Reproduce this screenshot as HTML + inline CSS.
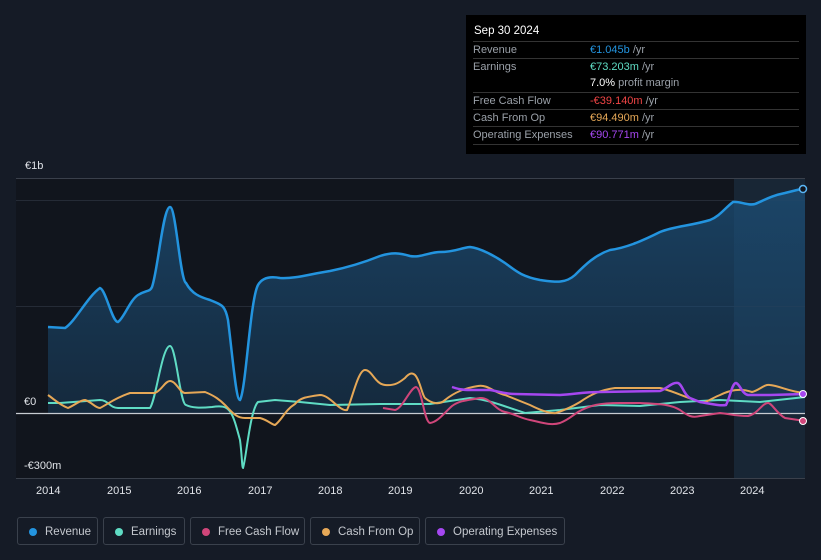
<!DOCTYPE html><html><head><style>
body{margin:0;width:821px;height:560px;background:#151b26;font-family:"Liberation Sans",sans-serif;overflow:hidden;position:relative}
.tt{position:absolute;left:466px;top:15px;width:340px;height:139px;background:#000;color:#9aa0a8;font-size:11px}
.tt .h{position:absolute;left:8px;top:10px;color:#fff;font-size:11.5px}
.row{position:absolute;left:7px;width:326px;height:17px;border-top:1px solid #333;line-height:17px}
.row span{position:absolute;left:0}.row b{position:absolute;left:117px;font-weight:normal}
.lg{position:absolute;top:517px;height:28px;border:1px solid #3a414c;border-radius:3px;color:#c4c8ce;font-size:11.5px;line-height:28px;box-sizing:border-box;padding-left:27px}
.lg i{position:absolute;left:11px;top:10px;width:8px;height:8px;border-radius:50%}
.ax{position:absolute;color:#e0e3e8;font-size:11px}
</style></head><body>
<svg width="821" height="560" style="position:absolute;left:0;top:0">
<defs><linearGradient id="g" x1="0" y1="0" x2="0" y2="1"><stop offset="0" stop-color="#1c4f78" stop-opacity=".75"/><stop offset="1" stop-color="#1c4f78" stop-opacity=".35"/></linearGradient></defs>
<rect x="16" y="178" width="789" height="300" fill="#11151d"/>
<rect x="734" y="178" width="71" height="300" fill="#1a2a3c" opacity=".8"/>
<line x1="16" y1="178.5" x2="805" y2="178.5" stroke="#3a404b"/>
<line x1="16" y1="200.5" x2="805" y2="200.5" stroke="#252b36"/>
<line x1="16" y1="306.5" x2="805" y2="306.5" stroke="#252b36"/>
<line x1="16" y1="478.5" x2="805" y2="478.5" stroke="#3a404b"/>
<path d="M48,327 L65,328 C75,322 88,296 100,288 C106,290 112,322 118,322 C124,318 130,300 138,295 C146,290 150,292 152,287 C158,270 163,207 170,207 C176,207 180,280 186,283 C192,294 200,297 210,300 C222,305 225,305 228,320 C233,360 236,400 240,400 C246,390 250,300 258,285 C262,278 270,276 280,278 C295,279 310,274 330,271 C350,267 365,262 380,256 C392,252 400,253 410,256 C420,258 430,252 440,252 C455,252 460,248 470,247 C480,248 495,256 505,263 C515,270 520,276 540,280 C555,282 565,284 575,275 C585,265 595,255 610,250 C625,248 640,242 660,232 C675,226 690,226 710,220 C720,216 725,208 733,202 C740,201 748,206 755,204 C765,200 770,196 785,193 L805,188 L805,413 L48,413 Z" fill="url(#g)"/>
<path d="M48,327 L65,328 C75,322 88,296 100,288 C106,290 112,322 118,322 C124,318 130,300 138,295 C146,290 150,292 152,287 C158,270 163,207 170,207 C176,207 180,280 186,283 C192,294 200,297 210,300 C222,305 225,305 228,320 C233,360 236,400 240,400 C246,390 250,300 258,285 C262,278 270,276 280,278 C295,279 310,274 330,271 C350,267 365,262 380,256 C392,252 400,253 410,256 C420,258 430,252 440,252 C455,252 460,248 470,247 C480,248 495,256 505,263 C515,270 520,276 540,280 C555,282 565,284 575,275 C585,265 595,255 610,250 C625,248 640,242 660,232 C675,226 690,226 710,220 C720,216 725,208 733,202 C740,201 748,206 755,204 C765,200 770,196 785,193 L805,188" fill="none" stroke="#2394df" stroke-width="2.5"/>
<line x1="16" y1="413.5" x2="805" y2="413.5" stroke="#c8ccd2" stroke-width="1.2"/>
<path d="M48,403 L60,403 L100,400 C108,400 110,408 118,408 L150,408 C156,400 162,346 170,346 C176,346 180,404 186,405 C192,408 200,408 212,407 C230,404 232,410 240,440 C242,455 242,468 243,468 C246,460 250,410 258,402 L275,400 L300,402 L330,405 L380,404 L430,404 L470,398 C490,400 500,405 525,413 L560,410 L600,405 L640,406 L680,402 L720,400 L760,402 L805,397" fill="none" stroke="#5fdcc4" stroke-width="2"/>
<path d="M48,395 C55,400 60,405 68,408 C75,405 80,400 85,400 C92,402 95,408 100,408 C108,404 115,398 130,393 L155,393 C162,390 165,381 170,381 C176,381 180,393 185,393 L205,392 C215,396 220,400 225,405 C232,412 236,418 245,418 L260,418 C268,420 272,425 275,425 C282,420 285,410 295,404 C300,398 305,397 320,395 C330,395 340,412 347,410 C352,400 358,370 365,370 C372,370 375,384 385,385 C395,386 400,382 405,378 C410,372 413,373 415,375 C420,380 422,395 425,398 C432,404 440,405 445,400 C455,392 465,388 478,386 C487,384 495,393 505,395 L530,405 C540,410 550,414 556,413 C565,410 575,405 580,402 C590,395 600,390 615,388 L660,388 C670,390 680,395 700,402 C705,404 712,398 720,395 C730,390 740,388 752,392 C760,390 764,384 770,385 C780,386 790,392 805,393" fill="none" stroke="#e6a857" stroke-width="2"/>
<path d="M383,408 L395,410 C403,408 410,388 416,387 C422,388 424,422 430,423 C438,422 445,412 452,406 C460,400 470,400 480,398 C490,397 495,410 505,412 C515,414 520,418 530,420 C540,422 550,426 560,423 C568,420 572,416 578,412 C590,405 600,403 620,403 L640,403 C660,404 670,404 680,410 C688,416 692,418 700,416 L720,413 C730,414 735,416 748,416 C758,414 762,403 768,403 C772,403 776,413 785,418 L805,421" fill="none" stroke="#d0467a" stroke-width="2"/>
<path d="M452,387 C458,389 462,390 470,390 L490,390 C498,391 504,394 515,394 L560,395 C575,394 585,392 600,392 L660,391 C668,388 672,382 678,383 C682,384 684,395 690,398 L700,402 C712,404 720,406 726,405 C730,398 732,383 736,383 C740,384 742,394 748,395 L770,395 L805,394" fill="none" stroke="#a547f0" stroke-width="2.5"/>
<circle cx="803" cy="189" r="3.5" fill="#11151d" stroke="#5ab6f5" stroke-width="1.5"/>
<circle cx="803" cy="394" r="3.5" fill="#a547f0" stroke="#fff" stroke-width="1"/>
<circle cx="803" cy="421" r="3.5" fill="#d0467a" stroke="#fff" stroke-width="1"/>
</svg>
<div class="ax" style="left:25px;top:160px">€1b</div>
<div class="ax" style="left:24px;top:396px">€0</div>
<div class="ax" style="left:24px;top:460px">-€300m</div>
<div class="ax" style="left:36px;top:485px">2014</div><div class="ax" style="left:107px;top:485px">2015</div><div class="ax" style="left:177px;top:485px">2016</div><div class="ax" style="left:248px;top:485px">2017</div><div class="ax" style="left:318px;top:485px">2018</div><div class="ax" style="left:388px;top:485px">2019</div><div class="ax" style="left:459px;top:485px">2020</div><div class="ax" style="left:529px;top:485px">2021</div><div class="ax" style="left:600px;top:485px">2022</div><div class="ax" style="left:670px;top:485px">2023</div><div class="ax" style="left:740px;top:485px">2024</div>
<div class="tt"><div class="h">Sep 30 2024</div>
<div class="row" style="top:26px"><span>Revenue</span><b><span style="position:static;color:#2394df">€1.045b</span> /yr</b></div>
<div class="row" style="top:43px"><span>Earnings</span><b><span style="position:static;color:#5fdcc4">€73.203m</span> /yr</b></div>
<div class="row" style="top:60px;border-top:none"><b><span style="position:static;color:#fff">7.0%</span> profit margin</b></div>
<div class="row" style="top:77px"><span>Free Cash Flow</span><b><span style="position:static;color:#f04545">-€39.140m</span> /yr</b></div>
<div class="row" style="top:94px"><span>Cash From Op</span><b><span style="position:static;color:#e6a857">€94.490m</span> /yr</b></div>
<div class="row" style="top:111px;border-bottom:1px solid #333"><span>Operating Expenses</span><b><span style="position:static;color:#a547f0">€90.771m</span> /yr</b></div>
</div>
<div class="lg" style="left:17px;width:81px"><i style="background:#2394df"></i>Revenue</div>
<div class="lg" style="left:103px;width:82px"><i style="background:#5fdcc4"></i>Earnings</div>
<div class="lg" style="left:190px;width:115px"><i style="background:#d0467a"></i>Free Cash Flow</div>
<div class="lg" style="left:310px;width:110px"><i style="background:#e6a857"></i>Cash From Op</div>
<div class="lg" style="left:425px;width:140px"><i style="background:#a547f0"></i>Operating Expenses</div>
</body></html>
